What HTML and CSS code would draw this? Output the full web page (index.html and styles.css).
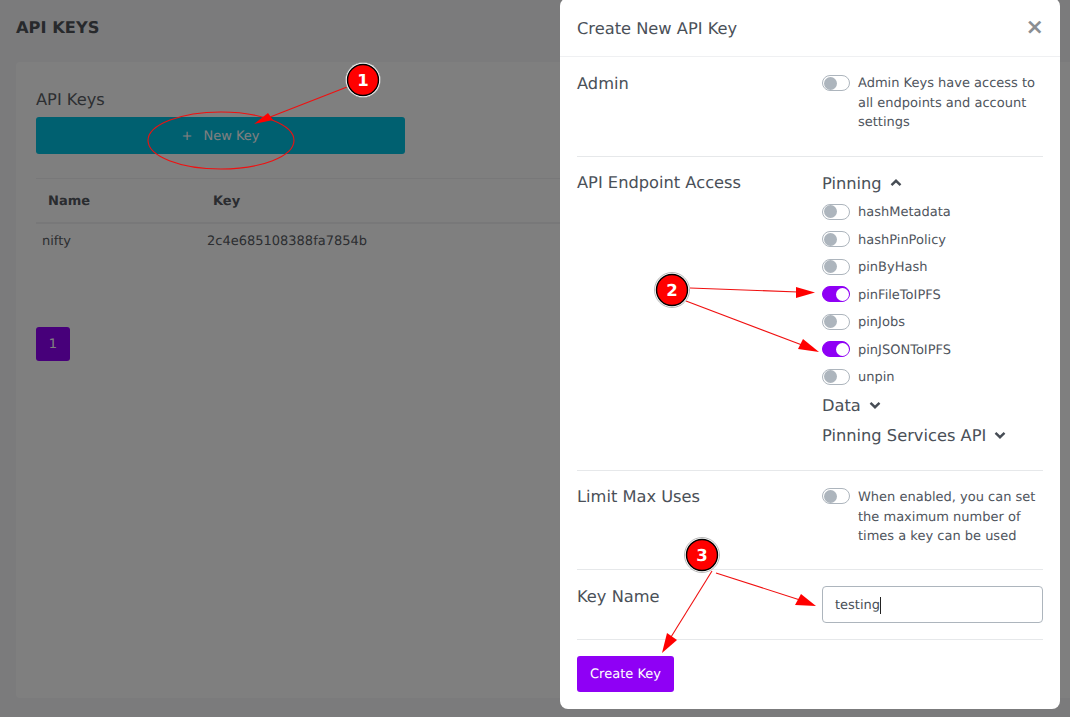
FILE: index.html

```html
<!DOCTYPE html>
<html lang="en">
<head>
  <meta charset="UTF-8" />
  <meta name="viewport" content="width=device-width, initial-scale=1.0" />
  <title>API Keys</title>
  <link rel="stylesheet" href="styles.css">
</head>
<body>
  <div class="page">
    <h1 class="page-title">API KEYS</h1>
    <div class="card">
      <h2 class="card-title">API Keys</h2>
      <button class="new-key"><span class="plus">+</span>New Key</button>
      <div class="table-head">
        <span class="col-name">Name</span>
        <span class="col-key">Key</span>
      </div>
      <div class="table-row">
        <span class="cell-name">nifty</span>
        <span class="cell-key">2c4e685108388fa7854b</span>
      </div>
      <div class="pager">1</div>
    </div>
  </div>

  <div class="backdrop"></div>

  <div class="modal">
    <div class="modal-head">
      <span class="modal-title">Create New API Key</span>
      <span class="close">×</span>
    </div>
    <div class="modal-body">
      <div class="row row-admin">
        <div class="label">Admin</div>
        <div class="toggle-line">
          <span class="switch"></span>
          <span class="hint">Admin Keys have access to all endpoints and account settings</span>
        </div>
      </div>

      <div class="row row-access">
        <div class="label">API Endpoint Access</div>
        <div>
          <div class="group">Pinning
            <svg class="chev" viewBox="0 0 12 8"><path d="M1.5 6.2 6 1.8l4.5 4.4"/></svg>
          </div>
          <div class="opts">
            <div class="opt"><span class="switch"></span>hashMetadata</div>
            <div class="opt"><span class="switch"></span>hashPinPolicy</div>
            <div class="opt"><span class="switch"></span>pinByHash</div>
            <div class="opt"><span class="switch on"></span>pinFileToIPFS</div>
            <div class="opt"><span class="switch"></span>pinJobs</div>
            <div class="opt"><span class="switch on"></span>pinJSONToIPFS</div>
            <div class="opt"><span class="switch"></span>unpin</div>
          </div>
          <div class="group">Data
            <svg class="chev" viewBox="0 0 12 8"><path d="M1.5 1.8 6 6.2l4.5-4.4"/></svg>
          </div>
          <div class="group">Pinning Services API
            <svg class="chev" viewBox="0 0 12 8"><path d="M1.5 1.8 6 6.2l4.5-4.4"/></svg>
          </div>
        </div>
      </div>

      <div class="row row-limit">
        <div class="label">Limit Max Uses</div>
        <div class="toggle-line">
          <span class="switch"></span>
          <span class="hint">When enabled, you can set the maximum number of times a key can be used</span>
        </div>
      </div>

      <div class="row row-name">
        <div class="label">Key Name</div>
        <div class="text-input"><span class="caret">testing</span></div>
      </div>

      <button class="create">Create Key</button>
    </div>
  </div>

  <!-- red annotations drawn over the screenshot -->
  <svg class="marks" viewBox="0 0 1070 717" width="1070" height="717">
    <ellipse class="mark-line" cx="221" cy="140.5" rx="73" ry="28.5"/>
    <line class="mark-line" x1="347" y1="87" x2="265" y2="119"/>
    <polygon class="mark-head" points="254,124 268,113 273,120"/>
    <line class="mark-line" x1="690" y1="288" x2="798" y2="292"/>
    <polygon class="mark-head" points="815,292.5 796,287 796,298"/>
    <line class="mark-line" x1="686" y1="301" x2="802" y2="345"/>
    <polygon class="mark-head" points="819,352 803,339 798,349"/>
    <line class="mark-line" x1="716" y1="573" x2="800" y2="600"/>
    <polygon class="mark-head" points="816,606 801,594 795,605"/>
    <line class="mark-line" x1="712" y1="571" x2="671" y2="637"/>
    <polygon class="mark-head" points="662,653 667,633 677,640"/>

    <circle class="dot-halo" cx="363" cy="80" r="17.5"/>
    <circle class="dot" cx="363" cy="80" r="15.5"/>
    <text class="dot-num" x="363" y="86">1</text>
    <circle class="dot-halo" cx="672" cy="290" r="17.5"/>
    <circle class="dot" cx="672" cy="290" r="15.5"/>
    <text class="dot-num" x="672" y="296">2</text>
    <circle class="dot-halo" cx="702" cy="555" r="17.5"/>
    <circle class="dot" cx="702" cy="555" r="15.5"/>
    <text class="dot-num" x="702" y="561">3</text>
  </svg>
</body>
</html>
```

FILE: styles.css

```css
* {
  box-sizing: border-box;
}
html, body {
  margin: 0;
  height: 717px;
  overflow: hidden;
}
body {
  background: #f6f6f8;
  font-family: "DejaVu Sans", sans-serif;
  color: #49505a;
  text-rendering: geometricPrecision;
}

/* page behind the dialog */
.page {
  padding: 19px 0 0 16px;
}
.page-title {
  margin: 0;
  font-size: 16.25px;
  line-height: 18px;
  font-weight: 700;
  color: #4f5359;
}
.card {
  height: 636px;
  margin-top: 25px;
  padding: 28px 20px 0;
  background: #ffffff;
  border-radius: 4px 0 0 4px;
}
.card-title {
  margin: 0;
  padding-top: 1px;
  font-size: 16.25px;
  line-height: 18px;
  font-weight: 400;
  color: #5a5e65;
}
.new-key {
  display: block;
  width: 369px;
  height: 37px;
  margin-top: 8px;
  padding-top: 3px;
  border: none;
  border-radius: 3px;
  background: #00c0e0;
  color: #ffffff;
  font-family: inherit;
  font-size: 13px;
  text-rendering: inherit;
}
.plus {
  margin-right: 11px;
}
.table-head {
  display: flex;
  height: 46px;
  margin-top: 24px;
  padding-top: 2px;
  align-items: center;
  border-top: 1px solid #f0f0f2;
  border-bottom: 2px solid #f0f0f2;
  font-size: 13px;
  font-weight: 700;
  color: #54585f;
}
.col-name {
  width: 165px;
  margin-left: 12px;
}
.table-row {
  display: flex;
  margin-top: 9px;
  font-size: 13px;
  line-height: 18px;
  color: #585c63;
}
.cell-name {
  width: 165px;
  margin-left: 6px;
}
.pager {
  display: flex;
  width: 34px;
  height: 34px;
  margin-top: 76px;
  align-items: center;
  justify-content: center;
  border-radius: 3px;
  background: #8f00f5;
  color: #ffffff;
  font-size: 13px;
}
.backdrop {
  position: absolute;
  inset: 0;
  background: rgba(0, 0, 0, 0.5);
}

/* dialog */
.modal {
  position: absolute;
  top: -2px;
  left: 560px;
  width: 500px;
  background: #ffffff;
  border-radius: 8px;
}
.modal-head {
  display: flex;
  height: 59px;
  padding: 2px 16px 0 17px;
  align-items: center;
  justify-content: space-between;
  border-bottom: 1px solid #eff0f2;
}
.modal-title {
  font-size: 16.25px;
  color: #4a5058;
}
.close {
  font-size: 22px;
  line-height: 20px;
  font-weight: 700;
  color: #8b8e92;
}
.modal-body {
  padding: 0 17px 17px;
}
.row {
  display: grid;
  grid-template-columns: 245px 221px;
  border-bottom: 1px solid #e6e8ea;
}
.row-admin {
  height: 100px;
  padding-top: 17px;
}
.row-access {
  height: 314px;
  padding-top: 16px;
}
.row-limit {
  height: 99px;
  padding-top: 16px;
}
.row-name {
  height: 70px;
  padding-top: 16px;
}
.label {
  font-size: 16.25px;
  line-height: 20px;
  color: #4a5058;
}
.row-name .label {
  padding-top: 1px;
}
.toggle-line {
  display: flex;
  gap: 8px;
}
.hint {
  font-size: 13px;
  line-height: 19.5px;
  color: #4f555d;
}
.row-limit .hint {
  margin-top: 1px;
}
.switch {
  position: relative;
  flex: none;
  display: inline-block;
  width: 28px;
  height: 16px;
  margin-top: 1px;
  border: 1px solid #adb5bd;
  border-radius: 8px;
  background: #ffffff;
}
.switch::after {
  content: "";
  position: absolute;
  top: 0.5px;
  left: 0.5px;
  width: 13px;
  height: 13px;
  border-radius: 50%;
  background: #adb5bd;
}
.switch.on {
  border-color: #8f00f5;
  background: #8f00f5;
}
.switch.on::after {
  left: 13px;
  background: #ffffff;
}
.group {
  display: flex;
  height: 20px;
  align-items: center;
  gap: 8px;
  font-size: 16.25px;
  color: #4a5058;
}
.group + .group {
  margin-top: 10px;
}
.chev {
  width: 12px;
  height: 8px;
  fill: none;
  stroke: #474d55;
  stroke-width: 2.4;
}
.opts {
  display: flex;
  flex-direction: column;
  gap: 7.5px;
  margin: 9.5px 0 7.5px;
}
.opt {
  display: flex;
  height: 20px;
  align-items: center;
  gap: 8px;
  font-size: 13px;
  color: #4f555d;
}
.opt .switch {
  margin-top: -1.2px;
}
.text-input {
  height: 37px;
  padding: 2px 12px 0;
  display: flex;
  align-items: center;
  border: 1px solid #adb5bd;
  border-radius: 4px;
  font-size: 13px;
  color: #4a5058;
}
.caret {
  border-right: 1px solid #222;
  line-height: 17px;
}
.create {
  display: block;
  width: 97px;
  height: 36px;
  margin-top: 16px;
  border: none;
  border-radius: 3px;
  background: #8f00f5;
  color: #ffffff;
  font-family: inherit;
  font-size: 13px;
  text-rendering: inherit;
}

/* annotations */
.marks {
  position: absolute;
  top: 0;
  left: 0;
}
.mark-line {
  fill: none;
  stroke: #f01010;
  stroke-width: 1.1;
}
.mark-head {
  fill: #ff0000;
}
.dot-halo {
  fill: #ffffff;
  stroke: #888;
  stroke-width: 0.6;
}
.dot {
  fill: #ff0000;
  stroke: #000000;
  stroke-width: 1.4;
}
.dot-num {
  fill: #ffffff;
  font-size: 16.5px;
  font-weight: 700;
  text-anchor: middle;
}
```
